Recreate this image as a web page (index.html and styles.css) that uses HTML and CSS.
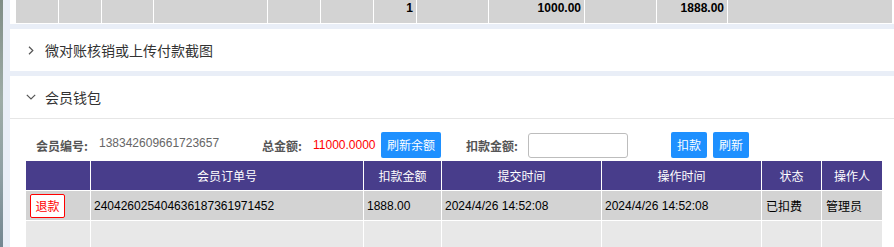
FILE: index.html
```html
<!DOCTYPE html>
<html lang="zh-CN">
<head>
<meta charset="utf-8">
<title>会员钱包</title>
<link rel="stylesheet" href="styles.css">
</head>
<body>
<div class="strip"></div>
<main class="main">
  <section class="sum-panel">
    <div class="sum-grid">
      <div class="sc"></div><div class="sc"></div><div class="sc"></div><div class="sc"></div>
      <div class="sc"></div><div class="sc"></div><div class="sc num">1</div><div class="sc"></div>
      <div class="sc num">1000.00</div><div class="sc"></div><div class="sc num">1888.00</div><div class="sc"></div>
    </div>
  </section>

  <section class="panel">
    <div class="panel-head">
      <svg class="chev-r" width="6" height="9" viewBox="0 0 6 9"><path d="M1 0.8 L4.8 4.5 L1 8.2" fill="none" stroke="#555" stroke-width="1.2"/></svg>
      <span class="panel-title">微对账核销或上传付款截图</span>
    </div>
  </section>

  <section class="panel">
    <div class="panel-head open">
      <svg class="chev-d" width="10" height="6" viewBox="0 0 10 6"><path d="M0.8 0.8 L5 5 L9.2 0.8" fill="none" stroke="#555" stroke-width="1.2"/></svg>
      <span class="panel-title">会员钱包</span>
    </div>
    <div class="panel-body">
      <div class="form-row">
        <span class="lbl lbl-no">会员编号:</span>
        <span class="val val-no">138342609661723657</span>
        <span class="lbl lbl-total">总金额:</span>
        <span class="val-red">11000.0000</span>
        <button class="btn btn-wide">刷新余额</button>
        <span class="lbl lbl-amt">扣款金额:</span>
        <input class="amt-input" type="text">
        <button class="btn btn-sm btn-deduct">扣款</button>
        <button class="btn btn-sm">刷新</button>
      </div>
      <div class="grid-table">
        <div class="th"></div>
        <div class="th">会员订单号</div>
        <div class="th">扣款金额</div>
        <div class="th">提交时间</div>
        <div class="th">操作时间</div>
        <div class="th">状态</div>
        <div class="th">操作人</div>

        <div class="td"><button class="btn-refund">退款</button></div>
        <div class="td">240426025404636187361971452</div>
        <div class="td">1888.00</div>
        <div class="td">2024/4/26 14:52:08</div>
        <div class="td">2024/4/26 14:52:08</div>
        <div class="td td-cn">已扣费</div>
        <div class="td td-cn">管理员</div>

        <div class="te"></div><div class="te"></div><div class="te"></div><div class="te"></div>
        <div class="te"></div><div class="te"></div><div class="te"></div>
      </div>
    </div>
  </section>
</main>
</body>
</html>
```

FILE: styles.css
```css
html, body {
  margin: 0;
  padding: 0;
  height: 100%;
  overflow: hidden;
}
body {
  display: flex;
  background: #e9eef7;
  font-family: "Liberation Sans", "Noto Sans CJK SC", sans-serif;
  font-size: 12px;
  color: #000;
}
.strip {
  width: 3px;
  flex: none;
  background: linear-gradient(#7f8d86, #9eaca6 40%, #8fa0a4 70%, #738792);
}
.main {
  flex: 1;
  padding-left: 7px;
  min-width: 0;
}
.sum-panel {
  background: #fff;
  padding: 0 0 1px 6px;
}
.sum-grid {
  display: grid;
  grid-template-columns: 42px 42px 51px 113px 52px 52px 42px 71px 95px 71px 70px 164px;
  column-gap: 1px;
  background: #fff;
  width: 876px;
}
.sc {
  background: #d3d3d3;
  height: 23px;
  box-sizing: border-box;
  line-height: 17px;
  padding-right: 3px;
}
.num {
  text-align: right;
  font-weight: bold;
  font-family: "Liberation Sans", sans-serif;
}
.panel {
  background: #fff;
  margin-top: 5px;
}
.panel-head {
  height: 42px;
  display: flex;
  align-items: center;
  box-sizing: border-box;
  padding-left: 18px;
}
.panel-head.open {
  padding-left: 16px;
  border-bottom: 1px solid #e6e6e6;
  height: 43px;
}
.chev-r { margin-right: 11px; }
.chev-d { margin-right: 9px; margin-top: -1px; }
.panel-title {
  font-family: "Noto Sans CJK SC", sans-serif;
  font-size: 14px;
  color: #333;
  line-height: 20px;
}
.panel-body {
  padding: 13px 0 0 16px;
}
.form-row {
  display: flex;
  align-items: center;
  height: 26px;
}
.lbl {
  font-family: "Noto Sans CJK SC", sans-serif;
  font-weight: bold;
  color: #555;
  font-size: 12px;
}
.lbl-no { margin-left: 10px; width: 63px; }
.val {
  color: #666;
  font-size: 12px;
  margin-top: -5px;
}
.val-no { width: 163px; }
.lbl-total { width: 51px; }
.val-red { color: #f00; width: 68px; }
.btn {
  border: none;
  border-radius: 2px;
  background: #1e90ff;
  color: #fff;
  font-family: "Noto Sans CJK SC", sans-serif;
  font-size: 12px;
  height: 26px;
  padding: 0;
  line-height: 26px;
}
.btn-wide { width: 60px; }
.lbl-amt { margin-left: 25px; width: 62px; }
.amt-input {
  width: 100px;
  height: 25px;
  box-sizing: border-box;
  border: 1px solid #bdbdbd;
  border-radius: 3px;
  padding: 0 4px;
  margin: 0;
}
.btn-sm { width: 36px; }
.btn-deduct { margin-left: 43px; margin-right: 6px; }
.grid-table {
  display: grid;
  grid-template-columns: 64px 272px 77px 159px 159px 59px 60px;
  gap: 1px;
  width: 856px;
  margin-top: 3px;
  background: #fff;
}
.th {
  background: #483d8b;
  color: #fff;
  height: 29px;
  line-height: 29px;
  text-align: center;
  font-family: "Noto Sans CJK SC", sans-serif;
  font-size: 12px;
}
.td {
  background: #d3d3d3;
  height: 29px;
  display: flex;
  align-items: center;
  padding-left: 3px;
  font-size: 12px;
  color: #000;
}
.td-cn {
  font-family: "Noto Sans CJK SC", sans-serif;
  padding-left: 4px;
}
.te {
  background: #e8e8e8;
  height: 29px;
}
.btn-refund {
  margin-left: 1px;
  width: 35px;
  height: 24px;
  border: 1px solid #f00;
  border-radius: 2px;
  background: #fff;
  color: #f00;
  font-family: "Noto Sans CJK SC", sans-serif;
  font-size: 12px;
  padding: 0;
}
```
